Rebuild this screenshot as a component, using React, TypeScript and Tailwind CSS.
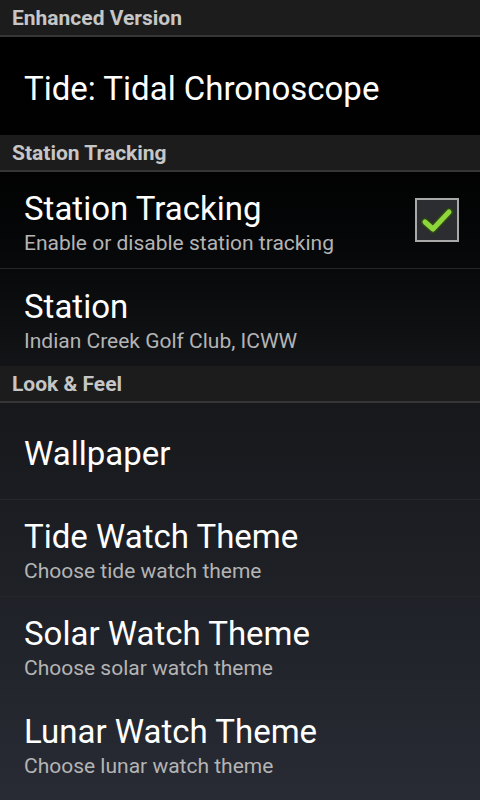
const font = { fontFamily: "Roboto, 'Noto Sans', sans-serif" };

function Header({ label }: { label: string }) {
  return (
    <div className="h-[37px] flex items-center px-3 pt-[2px] bg-[#1c1c1c] border-b-2 border-[#363636]">
      <span className="text-[21px] font-bold text-[#c6c6c6] leading-none">{label}</span>
    </div>
  );
}

function Item({
  title,
  summary,
  checked,
  last,
  tall,
}: {
  title: string;
  summary?: string;
  checked?: boolean;
  last?: boolean;
  tall?: boolean;
}) {
  return (
    <div
      className={
        (tall ? "h-[98px] " : "h-[97px] ") +
        "flex items-center justify-between pl-6 pr-5 pt-[6px] " +
        (last ? "" : "border-b border-[#25272b]")
      }
    >
      <div className="flex flex-col">
        <span className="text-[33px] leading-[38px] text-white">{title}</span>
        {summary && (
          <span className="text-[21px] leading-[26px] text-[#b4b4b4] mt-[2px]">{summary}</span>
        )}
      </div>
      {checked !== undefined && (
        <div className="w-[44px] h-[44px] border-2 border-[#a9a9a9] bg-[#2c2d30] flex items-center justify-center mr-[1px] -mt-[6px]">
          <svg width="34" height="30" viewBox="0 0 34 30">
            <path
              d="M5 17 L13 24 L29 7"
              fill="none"
              stroke="#2f4a12"
              strokeWidth="8"
              strokeLinecap="round"
              strokeLinejoin="round"
            />
            <path
              d="M5 17 L13 24 L29 7"
              fill="none"
              stroke="#8fd63c"
              strokeWidth="5"
              strokeLinecap="round"
              strokeLinejoin="round"
            />
          </svg>
        </div>
      )}
    </div>
  );
}

export default function App() {
  return (
    <div
      style={font}
      className="w-[480px] h-[800px] overflow-hidden bg-gradient-to-b from-[#000000] via-[#16181b] to-[#282b34]"
    >
      <Header label="Enhanced Version" />
      <Item title="Tide: Tidal Chronoscope" last tall />

      <Header label="Station Tracking" />
      <Item title="Station Tracking" summary="Enable or disable station tracking" checked />
      <Item title="Station" summary="Indian Creek Golf Club, ICWW" last />

      <Header label="Look & Feel" />
      <Item title="Wallpaper" />
      <Item title="Tide Watch Theme" summary="Choose tide watch theme" />
      <Item title="Solar Watch Theme" summary="Choose solar watch theme" />
      <Item title="Lunar Watch Theme" summary="Choose lunar watch theme" last />
    </div>
  );
}
